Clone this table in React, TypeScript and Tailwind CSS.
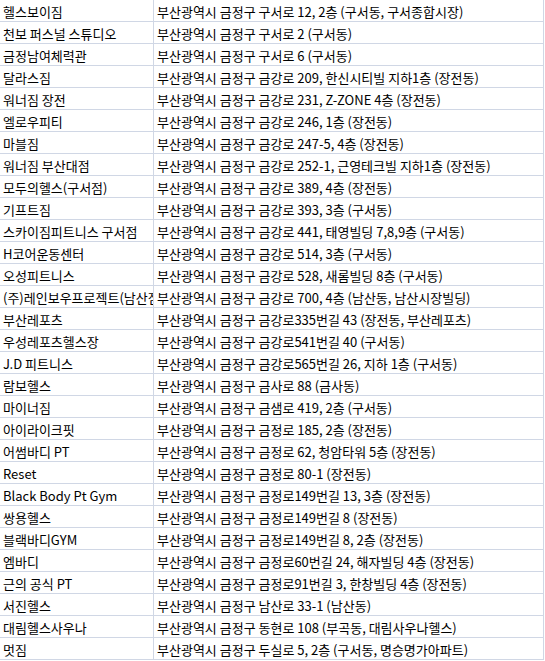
const rows: [string, string][] = [
  ['헬스보이짐', '부산광역시 금정구 구서로 12, 2층 (구서동, 구서종합시장)'],
  ['천보 퍼스널 스튜디오', '부산광역시 금정구 구서로 2 (구서동)'],
  ['금정남여체력관', '부산광역시 금정구 구서로 6 (구서동)'],
  ['달라스짐', '부산광역시 금정구 금강로 209, 한신시티빌 지하1층 (장전동)'],
  ['워너짐 장전', '부산광역시 금정구 금강로 231, Z-ZONE 4층 (장전동)'],
  ['엘로우피티', '부산광역시 금정구 금강로 246, 1층 (장전동)'],
  ['마블짐', '부산광역시 금정구 금강로 247-5, 4층 (장전동)'],
  ['워너짐 부산대점', '부산광역시 금정구 금강로 252-1, 근영테크빌 지하1층 (장전동)'],
  ['모두의헬스(구서점)', '부산광역시 금정구 금강로 389, 4층 (장전동)'],
  ['기프트짐', '부산광역시 금정구 금강로 393, 3층 (구서동)'],
  ['스카이짐피트니스 구서점', '부산광역시 금정구 금강로 441, 태영빌딩 7,8,9층 (구서동)'],
  ['H코어운동센터', '부산광역시 금정구 금강로 514, 3층 (구서동)'],
  ['오성피트니스', '부산광역시 금정구 금강로 528, 새롬빌딩 8층 (구서동)'],
  ['(주)레인보우프로젝트(남산점)', '부산광역시 금정구 금강로 700, 4층 (남산동, 남산시장빌딩)'],
  ['부산레포츠', '부산광역시 금정구 금강로335번길 43 (장전동, 부산레포츠)'],
  ['우성레포츠헬스장', '부산광역시 금정구 금강로541번길 40 (구서동)'],
  ['J.D 피트니스', '부산광역시 금정구 금강로565번길 26, 지하 1층 (구서동)'],
  ['람보헬스', '부산광역시 금정구 금사로 88 (금사동)'],
  ['마이너짐', '부산광역시 금정구 금샘로 419, 2층 (구서동)'],
  ['아이라이크핏', '부산광역시 금정구 금정로 185, 2층 (장전동)'],
  ['어썸바디 PT', '부산광역시 금정구 금정로 62, 청암타워 5층 (장전동)'],
  ['Reset', '부산광역시 금정구 금정로 80-1 (장전동)'],
  ['Black Body Pt Gym', '부산광역시 금정구 금정로149번길 13, 3층 (장전동)'],
  ['쌍용헬스', '부산광역시 금정구 금정로149번길 8 (장전동)'],
  ['블랙바디GYM', '부산광역시 금정구 금정로149번길 8, 2층 (장전동)'],
  ['엠바디', '부산광역시 금정구 금정로60번길 24, 해자빌딩 4층 (장전동)'],
  ['근의 공식 PT', '부산광역시 금정구 금정로91번길 3, 한창빌딩 4층 (장전동)'],
  ['서진헬스', '부산광역시 금정구 남산로 33-1 (남산동)'],
  ['대림헬스사우나', '부산광역시 금정구 동현로 108 (부곡동, 대림사우나헬스)'],
  ['멋짐', '부산광역시 금정구 두실로 5, 2층 (구서동, 명승명가아파트)'],
];

export default function App() {
  return (
    <div
      className="w-[545px] h-[661px] bg-white overflow-hidden text-[13px] text-black"
      style={{ fontFamily: '"Noto Sans CJK KR", "Noto Sans", sans-serif' }}
    >
      <div className="w-[544px] border-r border-[#d0d7e5]">
        {rows.map(([name, addr], i) => (
          <div key={i} className="flex h-[22px] border-b border-[#d0d7e5]">
            <div className="w-[154px] shrink-0 border-r border-[#d0d7e5] pl-[3px] overflow-hidden whitespace-nowrap leading-[21px] pt-[1px]">
              {name}
            </div>
            <div className="flex-1 pl-[3px] overflow-hidden whitespace-nowrap leading-[21px] pt-[1px]">
              {addr}
            </div>
          </div>
        ))}
      </div>
    </div>
  );
}
